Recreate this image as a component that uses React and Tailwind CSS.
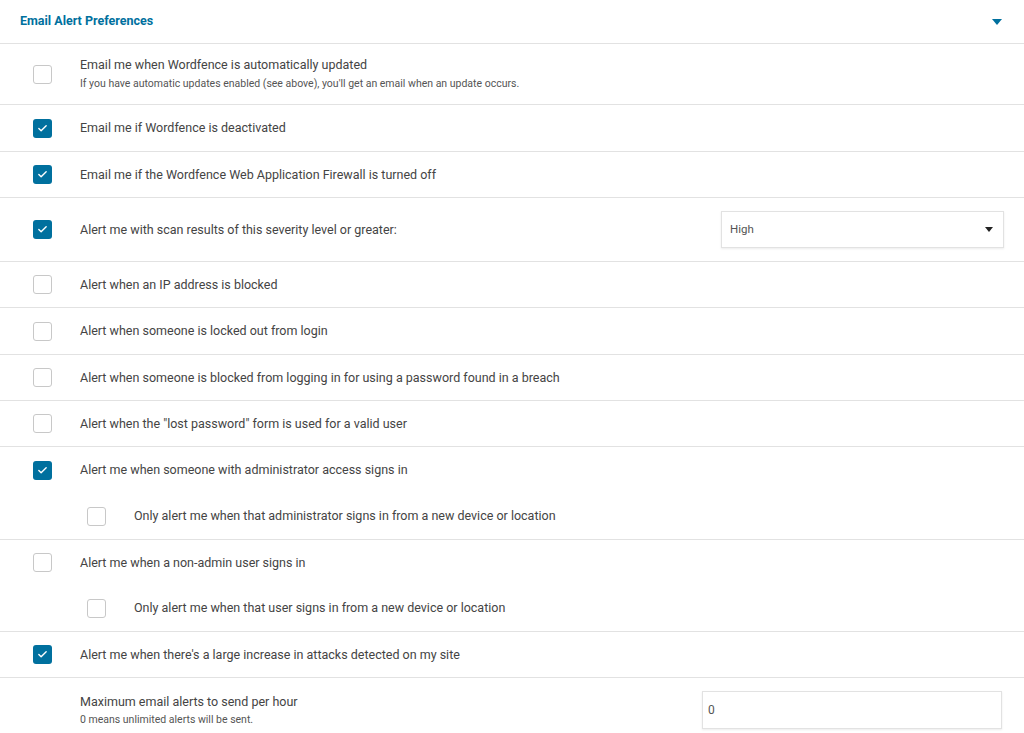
import { Check } from 'lucide-react'

const rows = [
  { label: 'Email me when Wordfence is automatically updated', note: "If you have automatic updates enabled (see above), you'll get an email when an update occurs.", checked: false, h: 'h-[60px]' },
  { label: 'Email me if Wordfence is deactivated', checked: true, h: 'h-[46px]' },
  { label: 'Email me if the Wordfence Web Application Firewall is turned off', checked: true, h: 'h-[45px]' },
  { label: 'Alert me with scan results of this severity level or greater:', checked: true, select: 'High', h: 'h-[63px]' },
  { label: 'Alert when an IP address is blocked', checked: false, h: 'h-[45px]' },
  { label: 'Alert when someone is locked out from login', checked: false, h: 'h-[46px]' },
  { label: 'Alert when someone is blocked from logging in for using a password found in a breach', checked: false, h: 'h-[45px]' },
  { label: 'Alert when the "lost password" form is used for a valid user', checked: false, h: 'h-[45px]' },
  { label: 'Alert me when someone with administrator access signs in', checked: true, h: 'h-[46px]', sub: 'Only alert me when that administrator signs in from a new device or location' },
  { label: 'Alert me when a non-admin user signs in', checked: false, h: 'h-[45px]', sub: 'Only alert me when that user signs in from a new device or location' },
  { label: "Alert me when there's a large increase in attacks detected on my site", checked: true, h: 'h-[45px]' },
]

function Box({ checked }) {
  return checked ? (
    <div className="w-[19px] h-[19px] rounded-[3px] bg-[#00709e] flex items-center justify-center shrink-0">
      <Check className="w-[11px] h-[11px] text-white" strokeWidth={3} />
    </div>
  ) : (
    <div className="w-[19px] h-[19px] rounded-[3px] border border-[#c8c8c8] bg-white shrink-0" />
  )
}

export default function App() {
  return (
    <div className="w-[1024px] h-[733px] overflow-hidden bg-white font-['Roboto',sans-serif] text-[#444]">
      {/* header */}
      <div className="h-[44px] flex items-center justify-between pl-5 pr-[22px] border-b border-[#e2e2e2]">
        <div className="text-[12.5px] font-bold text-[#00709e]">Email Alert Preferences</div>
        <svg width="10" height="6" viewBox="0 0 10 6">
          <path d="M0 0h10L5 6z" fill="#00709e" />
        </svg>
      </div>

      {rows.map((row) => (
        <div key={row.label} className="border-b border-[#e2e2e2]">
          <div className={`flex items-center pl-[33px] pr-5 ${row.h}`}>
            <Box checked={row.checked} />
            <div className="ml-7 flex-1">
              <div className="text-[12.5px] leading-4">{row.label}</div>
              {row.note && <div className="text-[10.5px] mt-[3px] text-[#555]">{row.note}</div>}
            </div>
            {row.select && (
              <div className="w-[283px] h-[37px] border border-[#e2e2e2] shadow-[0_1px_2px_rgba(0,0,0,0.08)] flex items-center justify-between pl-2 pr-[10px] text-[11.5px] text-[#555]">
                <span>{row.select}</span>
                <svg width="8" height="5" viewBox="0 0 8 5">
                  <path d="M0 0h8L4 5z" fill="#222" />
                </svg>
              </div>
            )}
          </div>
          {row.sub && (
            <div className="h-[46px] flex items-center pl-[87px]">
              <Box checked={false} />
              <div className="ml-7 text-[12.5px]">{row.sub}</div>
            </div>
          )}
        </div>
      ))}

      <div className="flex items-start pl-[80px] pr-[22px] pt-[16px]">
        <div className="flex-1">
          <div className="text-[12.5px] leading-4">Maximum email alerts to send per hour</div>
          <div className="text-[10.5px] mt-[2px] text-[#555]">0 means unlimited alerts will be sent.</div>
        </div>
        <div className="w-[300px] h-[38px] -mt-[3px] border border-[#e2e2e2] shadow-[0_1px_2px_rgba(0,0,0,0.08)] flex items-center px-[5px] text-[12px] text-[#555]">
          0
        </div>
      </div>
    </div>
  )
}
